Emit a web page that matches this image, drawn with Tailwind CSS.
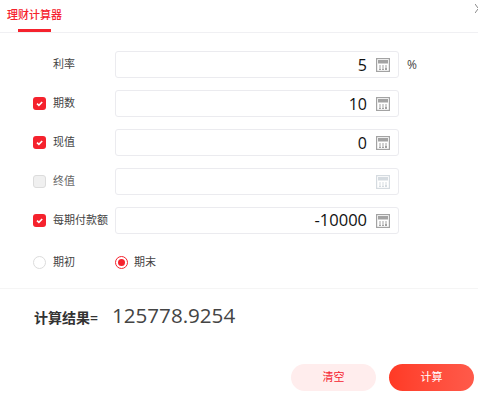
<!DOCTYPE html>
<html lang="zh-CN">
  <head>
    <meta charset="UTF-8" />
    <title>理财计算器</title>
    <script src="https://cdn.jsdelivr.net/npm/@tailwindcss/browser@4"></script>
  </head>
  <body class="bg-white font-['Open_Sans','Noto_Sans_CJK_SC',sans-serif] text-[11px] text-[#444]">
    <svg width="0" height="0" class="absolute">
      <symbol id="calc" viewBox="0 0 14 14">
        <rect x="0.6" y="0.6" width="12.8" height="12.8" fill="#fff" stroke="currentColor" stroke-width="1.2" />
        <rect x="2" y="2" width="10" height="3.5" fill="currentColor" />
        <path d="M3 7.5h2v1H3zM6 7.5h2v1H6zM9 7.5h2v1H9zM3 9.5h2v1H3zM6 9.5h2v1H6zM9 9.5h2v2.5H9zM3 11h2v1H3zM6 11h2v1H6z" fill="currentColor" />
      </symbol>
      <symbol id="tick" viewBox="0 0 13 13">
        <rect width="13" height="13" rx="3" fill="#f5222d" />
        <path d="M4 6.6l1.9 1.8L9.2 5" fill="none" stroke="#fff" stroke-width="1.6" />
      </symbol>
    </svg>

    <div class="relative h-[406px] w-[500px] overflow-hidden">
      <!-- Header -->
      <header class="h-[33px] w-[478px] border-b border-[#f0f0f3] pl-[7px]">
        <div class="relative h-[32px] w-[55px] pt-[7px] leading-[16px] font-medium text-[#f5222d]">
          理财计算器
          <span class="absolute bottom-0 left-[11px] h-[3px] w-[33px] bg-[#f5222d]"></span>
        </div>
      </header>
      <svg class="absolute top-[4px] left-[475px]" width="3" height="10" viewBox="0 0 3 10">
        <path d="M0 0l3 4M0 9l3-4" stroke="#888" fill="none" />
      </svg>

      <!-- Form -->
      <main class="flex w-[478px] flex-col gap-[12px] pt-[18px]">
        <div class="flex h-[27px] items-center">
          <span class="w-[115px] pl-[53px]">利率</span>
          <div class="flex h-[27px] w-[284px] items-center justify-end rounded-[3px] border border-[#ebebef] pr-[8px] text-[16px] text-[#111]">
            <span>5</span>
            <svg class="ml-[9px] h-[14px] w-[14px] text-[#a3a3a3]"><use href="#calc" /></svg>
          </div>
          <span class="ml-[8px] text-[12px]">%</span>
        </div>

        <div class="flex h-[27px] items-center">
          <div class="flex w-[115px] items-center pl-[33px]">
            <svg class="mr-[7px] h-[13px] w-[13px]"><use href="#tick" /></svg>
            <span>期数</span>
          </div>
          <div class="flex h-[27px] w-[284px] items-center justify-end rounded-[3px] border border-[#ebebef] pr-[8px] text-[16px] text-[#111]">
            <span>10</span>
            <svg class="ml-[9px] h-[14px] w-[14px] text-[#a3a3a3]"><use href="#calc" /></svg>
          </div>
        </div>

        <div class="flex h-[27px] items-center">
          <div class="flex w-[115px] items-center pl-[33px]">
            <svg class="mr-[7px] h-[13px] w-[13px]"><use href="#tick" /></svg>
            <span>现值</span>
          </div>
          <div class="flex h-[27px] w-[284px] items-center justify-end rounded-[3px] border border-[#ebebef] pr-[8px] text-[16px] text-[#111]">
            <span>0</span>
            <svg class="ml-[9px] h-[14px] w-[14px] text-[#a3a3a3]"><use href="#calc" /></svg>
          </div>
        </div>

        <div class="flex h-[27px] items-center">
          <div class="flex w-[115px] items-center pl-[33px]">
            <span class="mr-[7px] h-[13px] w-[13px] rounded-[3px] border border-[#dcdcdc] bg-[#f0f0f0]"></span>
            <span class="text-[#666]">终值</span>
          </div>
          <div class="flex h-[27px] w-[284px] items-center justify-end rounded-[3px] border border-[#ebebef] pr-[8px]">
            <svg class="h-[14px] w-[14px] text-[#d5dbe0]"><use href="#calc" /></svg>
          </div>
        </div>

        <div class="flex h-[27px] items-center">
          <div class="flex w-[115px] items-center pl-[33px]">
            <svg class="mr-[7px] h-[13px] w-[13px]"><use href="#tick" /></svg>
            <span class="whitespace-nowrap">每期付款额</span>
          </div>
          <div class="flex h-[27px] w-[284px] items-center justify-end rounded-[3px] border border-[#ebebef] pr-[8px] text-[16px] text-[#111]">
            <span class="text-[16.5px]">-10000</span>
            <svg class="ml-[9px] h-[14px] w-[14px] text-[#a3a3a3]"><use href="#calc" /></svg>
          </div>
        </div>

        <div class="mt-[3px] flex h-[26px] items-center">
          <div class="flex w-[115px] items-center pl-[33px]">
            <span class="mr-[7px] h-[13px] w-[13px] rounded-full border border-[#dcdcdc]"></span>
            <span>期初</span>
          </div>
          <div class="flex items-center">
            <span class="mr-[6px] flex h-[13px] w-[13px] items-center justify-center rounded-full border border-[#f5222d]">
              <span class="h-[7px] w-[7px] rounded-full bg-[#f5222d]"></span>
            </span>
            <span>期末</span>
          </div>
        </div>
      </main>

      <!-- Result -->
      <section class="mt-[13px] flex h-[58px] w-[478px] items-center border-t border-[#f5f5f5] pl-[34px]">
        <span class="w-[78px] text-[14px] leading-[18px] font-semibold text-[#333]">计算结果=</span>
        <span class="mb-[5px] text-[20.6px] leading-[26px] text-[#444]">125778.9254</span>
      </section>

      <!-- Buttons -->
      <div class="mt-[18px] flex w-[474px] justify-end gap-[13px]">
        <button class="h-[27px] w-[85px] rounded-full bg-[#ffeded] text-[#f5222d]">清空</button>
        <button class="h-[27px] w-[85px] rounded-full bg-gradient-to-r from-[#ff3a25] to-[#ff5a4a] text-white">计算</button>
      </div>
    </div>
  </body>
</html>
